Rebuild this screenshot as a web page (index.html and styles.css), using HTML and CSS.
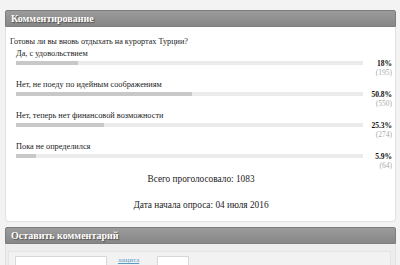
FILE: index.html
```html
<!DOCTYPE html>
<html lang="ru">
<head>
  <meta charset="UTF-8">
  <title>Комментирование</title>
  <link rel="stylesheet" href="styles.css">
</head>
<body>
  <div class="panel">
    <div class="panel-head">Комментирование</div>
    <div class="panel-body poll">
      <div class="question">Готовы ли вы вновь отдыхать на курортах Турции?</div>

      <div class="answer">
        <div class="label">Да, с удовольствием</div>
        <div class="bar-row">
          <div class="bar"><div class="fill" style="width:18%"></div></div>
          <b class="pct">18%</b>
        </div>
        <div class="count">(195)</div>
      </div>

      <div class="answer">
        <div class="label">Нет, не поеду по идейным соображениям</div>
        <div class="bar-row">
          <div class="bar"><div class="fill" style="width:50.8%"></div></div>
          <b class="pct">50.8%</b>
        </div>
        <div class="count">(550)</div>
      </div>

      <div class="answer">
        <div class="label">Нет, теперь нет финансовой возможности</div>
        <div class="bar-row">
          <div class="bar"><div class="fill" style="width:25.3%"></div></div>
          <b class="pct">25.3%</b>
        </div>
        <div class="count">(274)</div>
      </div>

      <div class="answer">
        <div class="label">Пока не определился</div>
        <div class="bar-row">
          <div class="bar"><div class="fill" style="width:5.9%"></div></div>
          <b class="pct">5.9%</b>
        </div>
        <div class="count">(64)</div>
      </div>

      <div class="total">Всего проголосовало: 1083</div>
      <div class="total date">Дата начала опроса: 04 июля 2016</div>
    </div>
  </div>

  <div class="panel second">
    <div class="panel-head">Оставить комментарий</div>
    <div class="panel-body comment">
      <div class="comment-box">
        <input type="text" class="field">
        <a href="#" class="link">защита</a>
        <input type="text" class="field small">
      </div>
    </div>
  </div>
</body>
</html>
```

FILE: styles.css
```css
body {
  margin: 0;
  padding: 10px 4px 0 5px;
  background: #f3f3f3;
  font-family: "Liberation Serif", "Times New Roman", serif;
  color: #333;
}
.panel.second {
  margin-top: 5px;
}
.panel-head {
  height: 15px;
  line-height: 15px;
  padding: 0 5px;
  background: linear-gradient(#9b9b9b, #878787);
  border: 1px solid #7d7d7d;
  border-radius: 2px 2px 0 0;
  color: #fff;
  font-family: "Liberation Serif", serif;
  font-size: 10px;
  font-weight: bold;
  text-shadow: 1px 1px 1px #505050;
}
.panel-body {
  background: #fff;
  border: 1px solid #e2e2e2;
  border-top: none;
  border-radius: 0 0 4px 4px;
}
.poll {
  padding: 9px 3px 10px 4px;
}
.question {
  font-size: 8.2px;
  line-height: 12px;
  color: #222;
  margin-bottom: 1px;
}
.answer {
  margin-bottom: 2px;
}
.label {
  padding-left: 6px;
  font-size: 8.3px;
  line-height: 10px;
  color: #222;
}
.bar-row {
  display: flex;
  align-items: center;
  height: 8px;
  padding-left: 6px;
}
.bar {
  flex: 1;
  height: 4px;
  background: #ebebeb;
}
.fill {
  height: 100%;
  background: #c8c8c8;
}
.pct {
  width: 29px;
  text-align: right;
  font-size: 7.5px;
  color: #111;
}
.count {
  text-align: right;
  font-size: 7.5px;
  line-height: 10px;
  margin-top: 1px;
  color: #aaa;
}
.total {
  text-align: center;
  font-size: 9.3px;
  line-height: 12px;
  color: #222;
}
.total.date {
  margin-top: 14px;
}
.comment {
  background: #ededed;
  padding: 7px 4px 10px 2px;
}
.comment-box {
  background: #f2f2f2;
  border: 1px solid #e4e4e4;
  padding: 4px 6px;
  display: flex;
  align-items: flex-start;
  gap: 11px;
}
.field {
  width: 90px;
  height: 14px;
  border: 1px solid #d8d8d8;
  background: #fff;
  padding: 0;
}
.field.small {
  width: 30px;
  margin-left: -7px;
}
.link {
  width: 35px;
  color: #5a9cc8;
  font-size: 7px;
  line-height: 9px;
  text-decoration: underline;
}
```
